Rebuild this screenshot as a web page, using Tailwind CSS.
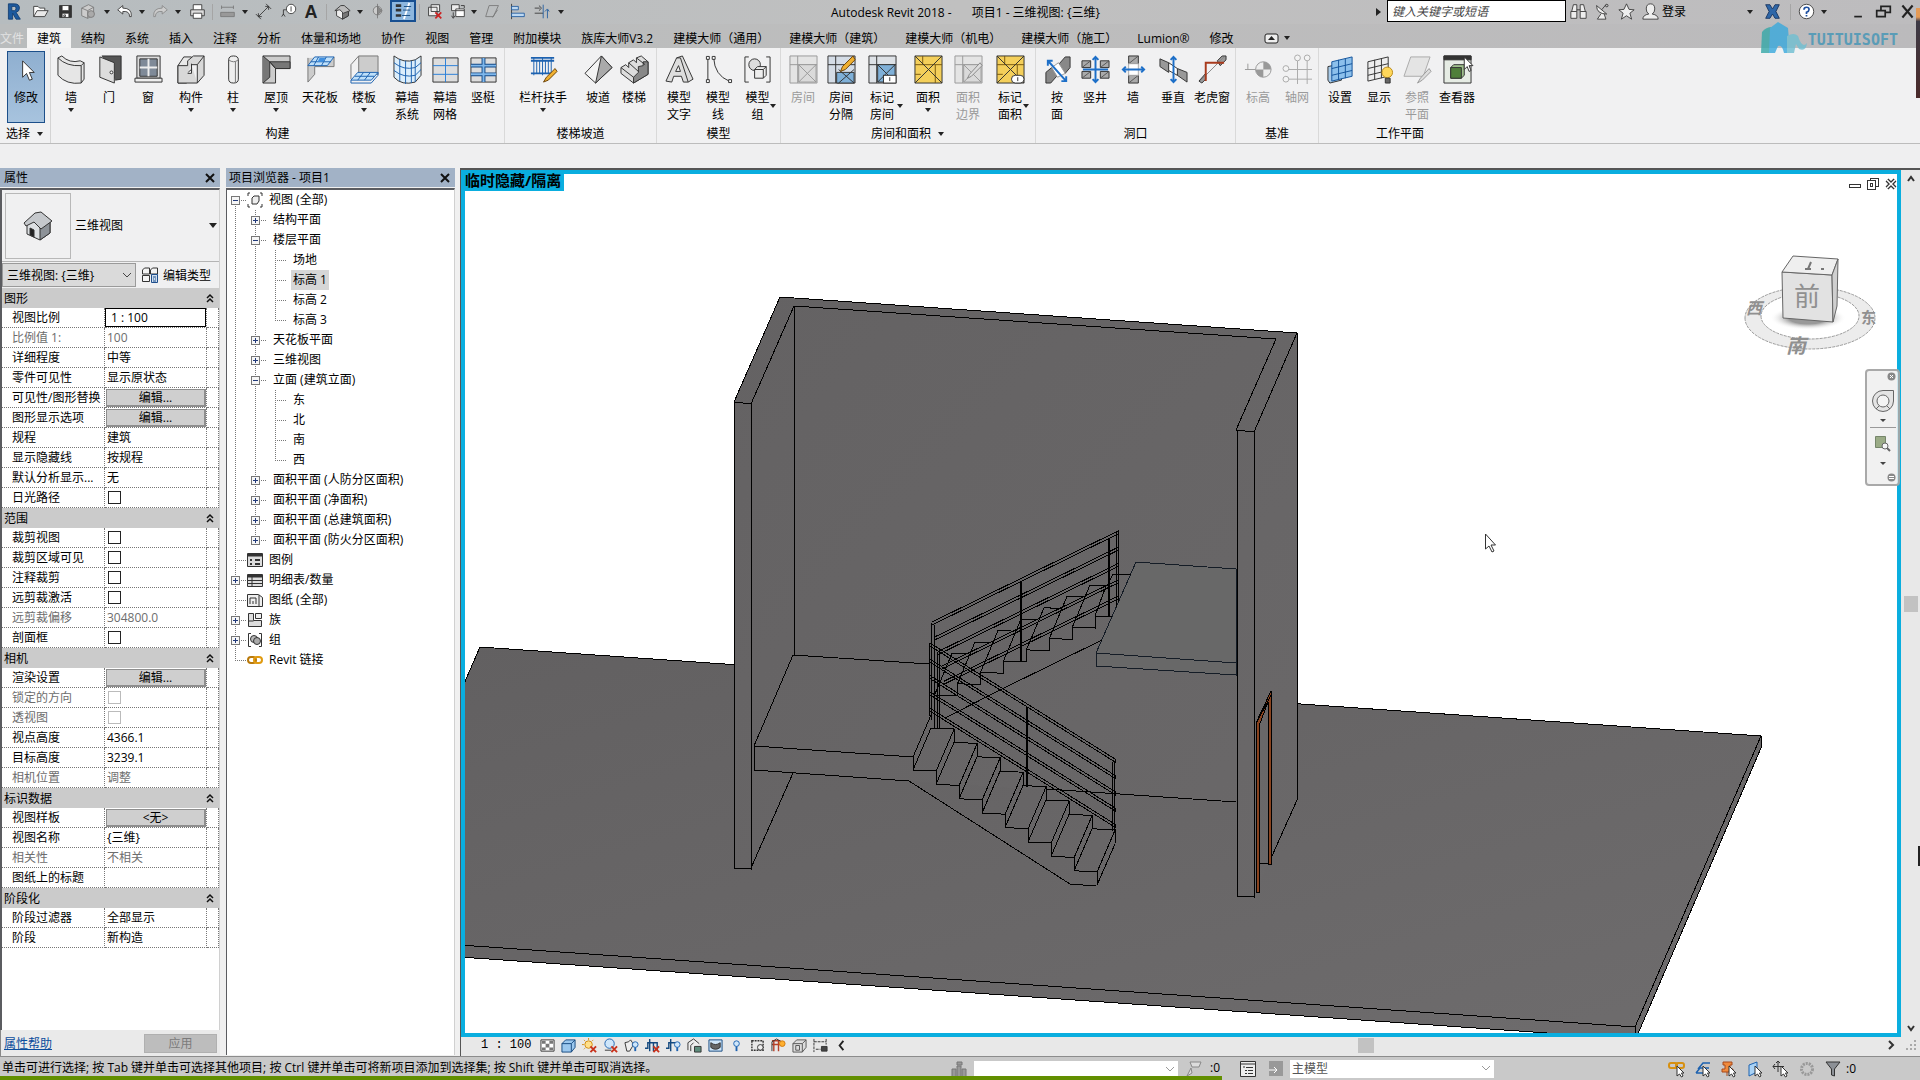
<!DOCTYPE html>
<html lang="zh-CN">
<head>
  <meta charset="UTF-8">
  <title>Autodesk Revit 2018 - 项目1 - 三维视图: {三维}</title>
  <script src="https://cdn.jsdelivr.net/npm/@tailwindcss/browser@4"></script>
</head>
<body class="h-screen flex flex-col overflow-hidden bg-[#f0f0f0] text-black text-[12px] leading-[17px] font-['Open_Sans','Noto_Sans_CJK_SC',sans-serif] relative">

  <!-- title bar -->
  <header class="h-6 shrink-0 flex items-center bg-linear-to-r from-[#b6bcbf] via-[#c0c0c0] to-[#bdbcbe] whitespace-nowrap">
    <div id="quick" class="flex items-center h-full w-[831px] shrink-0"></div>
    <h1 class="flex gap-5"><span>Autodesk Revit 2018 -</span><span>项目1 - 三维视图: {三维}</span></h1>
    <div class="ml-auto flex items-center h-full">
      <svg class="w-2 h-3 mr-1" viewBox="0 0 8 12"><path d="M1 2l5 4-5 4z" fill="#222"/></svg>
      <input type="text" aria-label="搜索" placeholder="键入关键字或短语" class="w-[179px] h-[22px] self-start bg-white border border-black px-1 italic placeholder:text-[#444]">
      <div id="account" class="flex items-center h-full"></div>
    </div>
  </header>

  <!-- ribbon tabs -->
  <nav class="h-6 shrink-0 flex items-end bg-linear-to-r from-[#b9bcbd] via-[#bdbdbd] to-[#bbbabc] whitespace-nowrap">
    <div id="tabs" class="flex items-end"></div>
    <button aria-label="最小化功能区" class="flex items-center gap-1 h-5 pl-5">
      <svg class="w-[15px] h-[11px]" viewBox="0 0 15 11"><rect x="1" y="1" width="13" height="9" rx="2" fill="#eee" stroke="#222"/><path d="M4 7l3.500-4 3.500 4z" fill="#222"/></svg>
      <svg class="w-2 h-2" viewBox="0 0 8 8"><path d="M1 2h6L4 6z" fill="#222"/></svg>
    </button>
  </nav>

  <!-- ribbon panels -->
  <section id="ribbon" class="h-24 shrink-0 flex bg-[#f1f1f2] border-b border-[#bcbcbc]"></section>
  <div class="h-6 shrink-0 bg-[#efeff0]"></div>

  <main class="flex-1 min-h-0 flex">

    <!-- properties palette -->
    <aside class="w-[220px] shrink-0 flex flex-col mr-[6px]">
      <div class="h-[19px] shrink-0 flex items-center justify-between bg-[#a2b2c6] pl-1 pr-1">
        <h2>属性</h2>
        <button aria-label="关闭属性" class="size-3"><svg viewBox="0 0 12 12" stroke="#111" stroke-width="2"><path d="M2 2l8 8M10 2l-8 8"/></svg></button>
      </div>
      <div class="flex-1 min-h-0 flex flex-col mt-[1px] border-l-2 border-t-2 border-[#5b5c60] border-r border-r-[#d0d0d0] bg-white">
        <button class="h-[72px] shrink-0 flex items-center bg-[#f0f0f1] border-b border-[#b4b4b4] text-left">
          <span class="ml-[3px] size-[66px] border border-[#b8b8b8] flex items-center justify-center">
            <svg class="size-8" viewBox="0 0 32 32" stroke="#333"><path d="M5 14v10l13 6 10-7V12L17 5z" fill="#dcdfe2"/><path d="M18 17v13l10-7V12z" fill="#8d9298"/><path d="M2 13L13 3l6-1 11 9-11 8-7-7-8 4z" fill="#c5c8cc"/><path d="M8 18l4 2v7l-4-2z" fill="#222"/></svg>
          </span>
          <span class="ml-1 flex-1">三维视图</span>
          <svg class="w-3 h-2" viewBox="0 0 12 8"><path d="M2 1h8L6 6z" fill="#222"/></svg>
        </button>
        <div class="h-[26px] shrink-0 flex items-center bg-[#f0f0f1]">
          <div class="relative w-[134px] h-6">
            <select aria-label="实例" class="appearance-none w-full h-full bg-[#dadada] border border-[#9a9a9a] pl-1"><option>三维视图: {三维}</option></select>
            <svg class="absolute right-1 top-2 w-[10px] h-[9px] pointer-events-none" viewBox="0 0 10 9" fill="none" stroke="#444"><path d="M1 2l4 4 4-4"/></svg>
          </div>
          <button class="flex items-center gap-1 ml-[5px]">
            <svg class="size-[18px]" viewBox="0 0 18 18" fill="#f4f4f4" stroke="#333"><path d="M1.500 4l2-2h5v6h-7zM9.500 4l2-2h5v6h-7zM1.500 9.500h7v6h-7z"/><path d="M10.500 8.500h6v8h-6z" fill="#cfdff0" stroke="#1e4e8c"/><path d="M12 11h3M12 13h1M14 13h1M12 15h3" stroke="#1e4e8c"/></svg>
            编辑类型
          </button>
        </div>
        <table class="w-full table-fixed border-separate border-spacing-0 whitespace-nowrap">
          <colgroup><col class="w-[103px]"><col class="w-[102px]"><col></colgroup>
          <tbody id="props"></tbody>
        </table>
      </div>
      <div class="h-[26px] shrink-0 flex items-center justify-between bg-[#eaeaea] border-l border-[#888] pl-[3px] pr-[3px]">
        <a href="#" class="text-[#0b4c9c] underline">属性帮助</a>
        <button disabled class="w-[73px] h-[19px] bg-[#bdbdbd] border border-[#b0b0b0] text-[#7b7b7b]">应用</button>
      </div>
    </aside>

    <!-- project browser -->
    <aside class="w-[229px] shrink-0 flex flex-col mr-[5px]">
      <div class="h-[19px] shrink-0 flex items-center justify-between bg-[#a2b2c6] pl-[3px] pr-1">
        <h2>项目浏览器 - 项目1</h2>
        <button aria-label="关闭项目浏览器" class="size-3"><svg viewBox="0 0 12 12" stroke="#111" stroke-width="2"><path d="M2 2l8 8M10 2l-8 8"/></svg></button>
      </div>
      <ul id="tree" class="flex-1 min-h-0 mt-[1px] mb-[1px] border-l border-t-2 border-[#5b5c60] border-r border-r-[#d0d0d0] bg-white whitespace-nowrap"></ul>
    </aside>

    <!-- drawing area -->
    <section class="flex-1 min-w-0 flex flex-col border-t-2 border-l border-[#555]">
      <div class="flex-1 min-h-0 flex">
        <div class="flex-1 min-w-0 relative border-4 border-[#0aaedf] bg-white">
          <svg class="absolute inset-0 w-full h-full" viewBox="465 174 1432 859" preserveAspectRatio="xMidYMid slice">
            <defs>
              <linearGradient id="ground" x1="0" y1="0" x2="1" y2="1"><stop offset="0" stop-color="#626061"/><stop offset="1" stop-color="#6e6c6d"/></linearGradient>
              <linearGradient id="face" x1="0" y1="0" x2="1" y2="1"><stop offset="0" stop-color="#646263"/><stop offset="1" stop-color="#6a6869"/></linearGradient>
              <radialGradient id="shade"><stop offset=".5" stop-color="#999"/><stop offset="1" stop-color="#fff" stop-opacity="0"/></radialGradient>
            </defs>
            <g stroke="#000" fill="none" shape-rendering="crispEdges">
              <!-- site slab -->
              <path d="M480 647L1761 736V748L1637 1036H1590L460 957V693z" fill="url(#ground)"/>
              <path d="M460 945L1635 1027L1761 736M1635 1027V1036"/>
              <!-- walls -->
              <path d="M780 297L1297 333V800L1271 856L1254 897L1236 896V803L793 773L751 869L734 868V402z" fill="url(#face)" stroke="none"/>
              <path d="M734 868V402L780 297L1297 333V800L1272 856M734 868L751 869V404L734 402M751 404L794 306L1276 339L1236 430L1254 432L1297 333M1237 430V896L1254 897V432M794 306V655M793 773L751 868"/>
              <path d="M1047 789L1236 802"/>
              <!-- lower landing -->
              <path d="M929 664L793 655L754 746L913 757M754 746V770L909 781L1070 884L1096 886"/>
              <!-- upper landing -->
              <path d="M1136 562L1236 569V675L1096 666V653z" fill="#686868" stroke="#141c26"/>
              <path d="M1096 653L1236 663" stroke="#141c26"/>
              <path d="M1102 640L1004 688L945 718"/>
              <path id="stairs"/>
              <path id="rails"/>
              <!-- door frame -->
              <path d="M1256 892V723L1271 691V864H1268V702L1259 726V892z" fill="#8a4420"/>
              <path d="M1259 863H1268M1257 722L1271 695"/>
            </g>
            <!-- view cube -->
            <g fill="none" stroke="#9a9a9a">
              <path fill-rule="evenodd" d="M1745 318a65 31 0 1 0 130 0a65 31 0 1 0 -130 0M1761 316a49 23 0 1 0 98 0a49 23 0 1 0 -98 0" fill="#ececec" stroke-dasharray="3 1"/>
              <ellipse cx="1808" cy="318" rx="38" ry="12" fill="url(#shade)" stroke="none"/>
              <path d="M1782 272L1832 275L1833 322L1783 318z" fill="#e2e2e2" stroke="#666"/>
              <path d="M1782 272L1793 256L1838 259L1832 275z" fill="#efefef" stroke="#666"/>
              <path d="M1832 275L1838 259L1837 306L1833 322z" fill="#cfcfcf" stroke="#666"/>
              <path d="M1811 262l-3 7M1805 269h6M1821 269h3" stroke="#777" stroke-width="2"/>
            </g>
            <g class="font-['Noto_Sans_CJK_SC',sans-serif]" fill="#909090">
              <text x="1794" y="306" font-size="26">前</text>
              <text x="1786" y="353" font-size="20" font-weight="bold" font-style="italic">南</text>
              <text x="1746" y="314" font-size="16" font-weight="bold" font-style="italic">西</text>
              <text x="1861" y="323" font-size="15" font-weight="bold">东</text>
            </g>
            <!-- mouse pointer -->
            <path d="M1485.500 534v15l3.500-3 3 6 2-1-3-6h4.500z" fill="#fff" stroke="#333"/>
          </svg>
          <span class="absolute -left-1 -top-1 h-[21px] pl-1 pr-[3px] bg-[#0aaedf] text-[15px] leading-[20px] font-bold">临时隐藏/隔离</span>
          <div class="absolute right-0 top-1 flex items-center gap-[6px]">
            <button aria-label="最小化视图"><svg class="size-3" viewBox="0 0 12 12"><rect x=".5" y="6.500" width="11" height="3" fill="#fff" stroke="#333"/></svg></button>
            <button aria-label="还原视图"><svg class="size-3" viewBox="0 0 12 12" fill="#fff" stroke="#333"><rect x="3.500" y=".5" width="8" height="8"/><rect x=".5" y="2.500" width="8" height="9"/><rect x="3.500" y="5.500" width="2" height="3"/></svg></button>
            <button aria-label="关闭视图"><svg class="size-3" viewBox="0 0 12 12" fill="none"><path d="M2 2l8 8M10 2l-8 8" stroke="#333" stroke-width="4"/><path d="M2 2l8 8M10 2l-8 8" stroke="#fff" stroke-width="1.500"/></svg></button>
          </div>
          <!-- navigation bar -->
          <div class="absolute -right-[3px] top-[195px] w-[35px] h-[117px] rounded border-2 border-[#8a8a8a]/70 bg-[#efefef]/85 flex flex-col items-center">
            <button aria-label="关闭导航栏" class="self-end"><svg class="size-[9px] mr-[2px] mt-[1px]" viewBox="0 0 9 9"><circle cx="4.500" cy="4.500" r="4" fill="#888"/><path d="M3 3l3 3M6 3L3 6" stroke="#fff"/></svg></button>
            <button aria-label="导航控制盘" class="mt-2"><svg class="size-6" viewBox="0 0 24 24" fill="#e4e4e4" stroke="#666"><path d="M12 1.500h10.500V12A10.500 10.500 0 1 1 12 1.500z"/><circle cx="12" cy="12" r="6" fill="#f3f3f3"/><path d="M8 17l-3 3M16 17l3 3"/></svg></button>
            <svg class="w-2 h-2 mt-1" viewBox="0 0 8 8"><path d="M1 2h6L4 5z" fill="#444"/></svg>
            <div class="w-[26px] border-t border-[#999] mt-[2px]"></div>
            <button aria-label="区域放大" class="mt-2"><svg class="size-4" viewBox="0 0 16 16"><path d="M.5.5h10v11H.5z" fill="#9aab86" stroke="#75856a"/><circle cx="10" cy="10" r="3" fill="#f5f5f5" stroke="#666"/><path d="M12 12l3 3" stroke="#666" stroke-width="2"/></svg></button>
            <svg class="w-2 h-2 mt-2" viewBox="0 0 8 8"><path d="M1 2h6L4 5z" fill="#444"/></svg>
            <svg class="size-[9px] mt-auto mb-[2px] mr-[2px] self-end" viewBox="0 0 9 9"><circle cx="4.500" cy="4.500" r="4" fill="#888"/><path d="M2 3.500h5M2 5.500h5" stroke="#fff"/></svg>
          </div>
        </div>
        <!-- vertical scroll bar -->
        <div class="w-[19px] shrink-0 bg-[#e8e8e8] flex flex-col items-center justify-between py-1">
          <svg class="w-[10px] h-[10px]" viewBox="0 0 10 10" fill="none" stroke="#333" stroke-width="2"><path d="M2 7l3-4 3 4"/></svg>
          <div class="w-[14px] h-4 bg-[#c2c2c2]"></div>
          <svg class="w-[10px] h-[10px]" viewBox="0 0 10 10" fill="none" stroke="#333" stroke-width="2"><path d="M2 3l3 4 3-4"/></svg>
        </div>
      </div>
      <!-- view control bar -->
      <div class="h-[19px] shrink-0 flex items-center bg-[#e8e8e8] pb-[3px]">
        <span class="w-[76px] pl-5 whitespace-pre font-['Liberation_Mono',monospace] text-[12px]">1 : 100</span>
        <div id="viewbar" class="flex items-center"></div>
        <div class="flex-1 flex justify-center pr-[6px]"><div class="w-4 h-[15px] bg-[#c2c2c2]"></div></div>
        <svg class="size-[10px] mr-[10px]" viewBox="0 0 10 10" fill="none" stroke="#333" stroke-width="2"><path d="M3 1l4 4-4 4"/></svg>
        <svg class="size-[10px] mr-1" viewBox="0 0 10 10" fill="#aaa"><path d="M8 0h2v2H8zM4 4h2v2H4zM8 4h2v2H8zM0 8h2v2H0zM4 8h2v2H4zM8 8h2v2H8z"/></svg>
      </div>
    </section>
  </main>

  <!-- status bar -->
  <footer class="h-6 shrink-0 flex items-center bg-[#c9c9c9] border-t border-[#8c8c8c] relative whitespace-nowrap">
    <span class="w-[950px] pl-[2px] pb-[2px]">单击可进行选择; 按 Tab 键并单击可选择其他项目; 按 Ctrl 键并单击可将新项目添加到选择集; 按 Shift 键并单击可取消选择。</span>
    <svg class="size-[18px] mr-[6px]" viewBox="0 0 18 18" fill="#999" stroke="#777"><path d="M2 9h4v8H2zM7 6h4v11H7zM12 9h4v8h-4zM7 2h5v3H7z"/></svg>
    <div class="relative w-[204px] h-4">
      <select aria-label="工作集" class="appearance-none block w-full h-full bg-white"><option></option></select>
      <svg class="absolute right-[3px] top-1 w-[10px] h-[9px] pointer-events-none" viewBox="0 0 10 9" fill="none" stroke="#999"><path d="M1 2l4 4 4-4"/></svg>
    </div>
    <svg class="size-4 ml-2 mr-2" viewBox="0 0 16 16" fill="#ddd" stroke="#888"><path d="M4 1h11l-2 5H6zM5 7l-4 8 5-3z"/></svg>
    <span class="w-[30px] pb-[2px]">:0</span>
    <svg class="size-4 mr-3" viewBox="0 0 16 16" fill="#eee" stroke="#333"><path d="M.5.500h15v15H.5z"/><path d="M1 3h14M3 6h2M6 6.500h7M5 9.500h2M8 9.500h5M5 12.500h2M8 12.500h5"/></svg>
    <svg class="size-4 mr-[6px]" viewBox="0 0 16 16"><path d="M1 0h14v15H1z" fill="#999"/><path d="M1 9h7M6 6l3 3-3 3" stroke="#fff" fill="none"/></svg>
    <div class="relative w-[204px] h-[18px]">
      <select aria-label="设计选项" class="appearance-none block w-full h-full bg-white pl-[2px] text-[#555]"><option>主模型</option></select>
      <svg class="absolute right-[3px] top-1 w-[10px] h-[9px] pointer-events-none" viewBox="0 0 10 9" fill="none" stroke="#999"><path d="M1 2l4 4 4-4"/></svg>
    </div>
    <div id="selectbar" class="flex items-center ml-auto"></div>
    <span class="w-[74px]">:0</span>
    <div class="absolute left-0 bottom-0 w-[1222px] h-1 bg-[#628f00]"></div>
  </footer>

  <!-- watermark and the sliver of the desktop behind the window -->
  <div class="absolute right-[22px] top-[22px] flex items-center opacity-80 pointer-events-none">
    <svg class="w-[48px] h-8" viewBox="0 0 48 32"><path d="M1 31L2 10Q6 5 12 5L10 31z" fill="#35a8a8"/><path d="M9 31L10 6L18 0L28 6L30 31H24Q22 22 18 24L15 31z" fill="#39a9dd"/><path d="M27 31L27 14Q34 10 38 14Q42 27 47 21Q46 30 39 27L36 22L34 31z" fill="#6fbfd2"/></svg>
    <span class="text-[15px] leading-[16px] font-bold text-[#4295b6] font-['DejaVu_Sans_Mono',monospace] pt-1">TUITUISOFT</span>
  </div>
  <div class="absolute right-0 top-[8px] w-1 h-[90px] bg-linear-to-b from-[#e59a55] from-10% via-[#3d3a46] via-15% to-[#4a2a2a]"></div>
  <div class="absolute right-0 top-[846px] w-[2px] h-5 bg-[#222]"></div>

  <script>
    const svg = (cls, size, body) =>
      `<svg class="${cls}" viewBox="0 0 ${size} ${size}" fill="none" stroke="#333">${body}</svg>`;
    const caret = '<svg class="w-2 h-2 mx-auto" viewBox="0 0 8 8"><path d="M1 2h6L4 6z" fill="#222"/></svg>';

    // ---- quick access toolbar: [name, cell class, 20px drawing]
    const quick = [
      ["Revit", "w-[26px]", '<path d="M4 1h7q6 0 6 5 0 4-4 5l5 8h-5l-4-7v7H4zM8 4v5h3q2 0 2-3 0-2-2-2z" fill="#1d5a9e" stroke="#123c70"/>'],
      ["打开", "w-[28px]", '<path d="M2 16V4h5l2 2h6v3" fill="#fff"/><path d="M2 16l4-7h13l-4 7z" fill="#e9e9e9"/>'],
      ["保存", "w-[22px]", '<path d="M3 3h14v14H3z" fill="#333"/><path d="M6 3h8v6H6zM6 12h8v5H6z" fill="#fff"/><path d="M8 14h2v2H8z"/>'],
      ["同步", "w-[25px]", '<path d="M2 6l8-4 6 3v9l-7 4-7-3z" fill="#ccc" stroke="#777"/><path d="M2 6l7 3 7-4M9 9v9" stroke="#777"/><circle cx="13" cy="13" r="4" fill="#aaa" stroke="#777"/>'],
      ["", "w-[11px]", "v"],
      ["撤销", "w-[25px]", '<path d="M8 3L2 8l6 5v-3q8-1 8 6h2q1-10-10-10z" fill="#fff"/>'],
      ["", "w-[10px]", "v"],
      ["重做", "w-[26px]", '<path d="M12 3l6 5-6 5v-3q-8-1-8 6H2Q1 6 12 6z" fill="#ccc" stroke="#888"/>'],
      ["", "w-[10px]", "v"],
      ["打印", "w-[28px]", '<path d="M5 8V2h10v6" fill="#fff"/><path d="M2 8h16v7H2z" fill="#ddd"/><path d="M5 12h10v6H5z" fill="#fff"/>'],
      ["", "w-[2px]", "|"],
      ["测量", "w-[28px]", '<path d="M3 5h14M3 3v4M17 3v4" stroke="#777"/><path d="M2 11h16v5H2z" fill="#999" stroke="#777"/>'],
      ["", "w-[8px]", "v"],
      ["对齐尺寸标注", "w-[28px]", '<path d="M4 16L16 4M1 13l6 6M13 1l6 6M4 12v4h4M12 4h4v4"/>'],
      ["按类别标记", "w-[23px]", '<circle cx="13" cy="7" r="5.500" fill="#fff"/><path d="M13 4v6M7 8H4v6M2 16l2-3 2 3"/>'],
      ["文字", "w-[22px]", "A"],
      ["", "w-[8px]", "|"],
      ["默认三维视图", "w-[25px]", '<path d="M3 9v6l7 4 7-4V8l-7-5z" fill="#eee"/><path d="M10 11v8l7-4V8z" fill="#777"/><path d="M1 9l7-6h4l7 6-8 3-4-4z" fill="#bbb"/>'],
      ["", "w-[10px]", "v"],
      ["剖面", "w-[25px]", '<circle cx="10" cy="9" r="5" fill="#ccc" stroke="#777"/><path d="M10 1v17" stroke="#777"/><path d="M10 4l5 5-5 5z" stroke="#777" fill="#888"/>'],
      ["细线", "on", '<path d="M2 4h6M2 9h6M2 15h6" stroke-width="3"/><path d="M17 1l-6 18" stroke="#fff" stroke-width="2"/><path d="M11 5h8M10 9h8M9 15h9" stroke="#14497f"/>'],
      ["", "w-[6px]", "|"],
      ["关闭隐藏窗口", "w-[24px]", '<path d="M6 2h10v8H6zM3 5h10v10H3z" fill="#eee"/><path d="M11 11l7 7M18 11l-7 7" stroke="#c22" stroke-width="2"/>'],
      ["切换窗口", "w-[23px]", '<path d="M3 2h9v7H3z" fill="#eee"/><path d="M8 7h10v9H8zM8 9h10" fill="#fff"/><path d="M5 11v6M3 15l2 3 2-3M14 3h4v3"/>'],
      ["", "w-[10px]", "v"],
      ["参照平面", "w-[27px]", '<path d="M6 3h11L11 16H2zM16 8l-6 9" stroke="#777"/>'],
      ["对齐", "w-[22px]", '<path d="M3 1v18"/><path d="M3 4h8v4H3zM3 12h15v4H3z" fill="#bcd8f2" stroke="#1d5a9e"/>'],
      ["修剪", "w-[26px]", '<path d="M2 6h6M2 12h10M7 3l3 3-3 3" stroke="#333"/><path d="M12 2v16M17 8v10M14 10l3-3 2 3" stroke="#1d5a9e"/>'],
      ["", "w-[14px]", "v"]
    ];
    const drawCell = ([name, w, d]) => {
      if (d === "v") return `<span class="${w}">${caret}</span>`;
      if (d === "|") return `<span class="${w} flex justify-center"><i class="w-px h-4 bg-[#a5a5a5]"></i></span>`;
      if (d === "A") return `<button class="${w} text-[18px] font-bold font-['Liberation_Sans',sans-serif] text-[#222]">A</button>`;
      if (w === "on") return `<button aria-label="${name}" class="w-[26px] h-[22px] self-start border-2 border-[#174f91] bg-[#8db7df] flex items-center justify-center">${svg("size-[18px]", 20, d)}</button>`;
      return `<button aria-label="${name}" class="${w} flex justify-center pb-[2px]">${svg("size-[17px] shrink-0", 20, d)}</button>`;
    };
    document.getElementById("quick").innerHTML = quick.map(drawCell).join("");

    const account = [
      ["搜索", "w-[24px]", '<path d="M2 10l2-8h4v8M12 10V2h4l2 8" fill="#eee"/><path d="M1 10h7v8H1zM12 10h7v8h-7zM8 8h4" fill="#eee"/>'],
      ["通讯中心", "w-[24px]", '<path d="M3 3q0 10 12 10zM9 8l5-6M8 13l-4 6h10l-2-6" fill="#eee"/><circle cx="15" cy="3" r="1.500"/>'],
      ["收藏夹", "w-[24px]", '<path d="M10 1l3 6.500 6 .5-5 4 2 7-6-4-6 4 2-7-5-4 6-.5z" fill="#eee"/>'],
      ["用户", "w-[24px]", '<path d="M10 1q5 0 5 6 0 4-3 6 7 1 7 6H1q0-5 7-6-3-2-3-6 0-6 5-6z" fill="#eee"/>'],
      ["登录", "w-[82px]", "t"],
      ["", "w-[12px]", "v"],
      ["Exchange", "w-[32px]", '<path d="M2 2h5l3 5 3-5h5l-4 8 4 8h-5l-3-5-3 5H2l4-8z" fill="#2f67a8" stroke="#14305c"/>'],
      ["", "w-[4px]", "|"],
      ["帮助", "w-[28px]", '<circle cx="10" cy="10" r="8.500" fill="#fff"/><path d="M7 8q0-3 3-3t3 2.500q0 2-3 3.500v2M10 14v2" stroke="#1d4fa0" stroke-width="2"/>'],
      ["", "w-[8px]", "v"],
      ["最小化", "w-[44px] pl-[16px]", '<path d="M5 16h9" stroke="#222" stroke-width="2"/>'],
      ["还原", "w-[22px]", '<path d="M7 8V4h11v7h-5M2 9h10v7H2z" stroke="#222" stroke-width="2"/>'],
      ["关闭", "w-[26px]", '<path d="M4 3l12 14M16 3L4 17" stroke="#222" stroke-width="2.500"/>']
    ];
    document.getElementById("account").innerHTML = account.map(c =>
      c[2] === "t" ? `<button class="${c[1]} text-left pb-[2px]">${c[0]}</button>` : drawCell(c)).join("");

    // ---- ribbon tabs
    const tabs = ["建筑", "结构", "系统", "插入", "注释", "分析", "体量和场地", "协作", "视图", "管理", "附加模块", "族库大师V3.2",
      "建模大师（通用）", "建模大师（建筑）", "建模大师（机电）", "建模大师（施工）", "Lumion®", "修改"];
    document.getElementById("tabs").innerHTML =
      '<button class="h-5 w-[27px] text-left text-[#e2e2e2]">文件</button>' +
      tabs.map((t, i) => `<button class="h-5 px-[10px] ${i === 0 ? "bg-[#f4f4f4]" : ""}">${t}</button>`).join("");

    // ---- ribbon panels
    const room = (bg, line, part) => `<path d="M1 1h28v28H1z" fill="${bg}" stroke="${line}"/><path d="M9 1v28M1 10h28" stroke="${line}"/><path d="M10 10h18v18H10z" fill="${part}" stroke="${line}"/><path d="M10 10l18 18M28 10L10 28" stroke="${line}"/>`;
    const area = '<path d="M1 1h28v28H1z" fill="#f4cf5a"/><path d="M9 1v9M1 10h28M22 10v19M1 20h6" stroke="#7a5a10"/><path d="M1 1l28 28M29 1L1 29"/>';
    const tag = (r) => `<rect x="16" y="21" width="13" height="8" rx="${r}" fill="#fff"/><path d="M22.500 23v4"/>`;
    const hatch = (x, y, w, h) => `<path d="M${x} ${y}h${w}v${h}h-${w}z" fill="#aaa"/><path d="M${x} ${y + h}l${w}-${h}" stroke="#555"/>`;
    const icons = {
      wall: '<path d="M1 3l4-2q8 8 19 5l4 2v17l-3 4Q10 31 1 21z" fill="#e6e6e6"/><path d="M1 3q9 9 24 8v18M25 11l3-3" fill="none"/>',
      door: '<path d="M7 1h20v24l-6 1" fill="#555"/><path d="M5 2l15 6v21L5 23z" fill="#ddd"/><circle cx="17" cy="18" r="1.500" fill="#fff"/>',
      window: '<path d="M3 1h24v23H3z" fill="#ddd"/><path d="M6 4h18v18H6z" fill="#7f8a98"/><path d="M15 4v18M6 13h18" stroke="#eee" stroke-width="2"/><path d="M1 24h28v4H1z" fill="#eee"/>',
      part: '<path d="M1 11l6-9h8v13l-5 4v10H1z" fill="#e8e8e8"/><path d="M1 11h10V6l6-5h11v20l-7 8H1zM21 29V10h-6M21 10l7-9M11 19H15V9" fill="#d8d8d8"/>',
      column: '<path d="M10 5q0-4 5-4t5 4v20q0 4-5 4t-5-4z" fill="#eee"/><path d="M10 5q5 4 10 0M17 7v21" stroke="#777"/>',
      roof: '<path d="M1 1h28v13H14v15H1z" fill="#ccc"/><path d="M1 1l7 6h21v7H14l-6-7v16l-7 6" fill="#777"/><path d="M8 7l6 7"/>',
      ceiling: '<path d="M2 3v25l7-8V12h20V2" fill="#ccc" stroke="#777"/><path d="M2 11l7-9h20l-7 9z" fill="#bfe0fa" stroke="#1d62b0"/><path d="M5 7h21M13 2l-5 9M21 2l-5 9" stroke="#1d62b0"/><path d="M14 3h6l-2 4h-6z" fill="#3f8fe0" stroke="none"/>',
      floor: '<path d="M9 1h20v19H9z" fill="#ccc" stroke="#777"/><path d="M9 1L1 10v15" stroke="#777"/><path d="M1 26l7-8h21l-7 8z" fill="#bfe0fa" stroke="#1d62b0"/><path d="M1 26v3h21l7-8v-3M5 22h20M14 18l-6 8M21 18l-6 8" stroke="#1d62b0"/>',
      curtain: '<path d="M1 1q10 8 22 4l6-4v20l-6 7Q9 32 1 23z" fill="#dceefb"/><path d="M1 8q10 8 22 5l6-5M1 16q10 8 22 5l6-6M7 4v23M13 6v24M19 6v23M23 5v23" stroke="#1d62b0"/>',
      grid: '<path d="M2 3h26v25H2z" fill="#ddd" stroke="#333"/><path d="M15 3v25M2 11h26M2 20h26" stroke="#2a7fd8"/>',
      mullion: '<path d="M2 3h26v25H2z" fill="#ddd"/><path d="M15 3v25M2 11h26M2 20h26" stroke="#164a86" stroke-width="4"/><path d="M15 3v25M2 11h26M2 20h26" stroke="#7fb8ec" stroke-width="2"/>',
      railing: '<path d="M2 3h24M2 6h24M2 19h24" stroke="#1d62b0" stroke-width="2"/><path d="M5 3v18M8 6v13M11 6v13M14 3v18M17 6v13M20 6v13M23 3v18" stroke="#1d62b0"/><path d="M27 14l-9 9-3 5 5-2 9-9z" fill="#f0b030" stroke="#6b4208"/>',
      ramp: '<path d="M1 19L18 1l11 12-17 16z" fill="#f3f3f3"/><path d="M18 1l-6 28 17-16z" fill="#aaa"/>',
      stair: '<path d="M1 13l5-3 3 3V8l5-3 3 3V3l5-2 7 6v13L14 29 1 19z" fill="#ddd"/><path d="M14 29v-6l5-5v-6l5-1V7l5 0v13z" fill="#888"/><path d="M1 13l13 10M9 8l10 9M17 3l9 7"/>',
      text: '<path d="M1 27L12 3l6-2 11 24-5 3h-5l-2-6H9l-2 6zM11 17h5l-2-6z" fill="#ddd"/><path d="M12 3h4l8 25" stroke="#333"/>',
      line: '<path d="M4 3v24M10 3q1 18 16 24"/><path d="M2.500 1.500h3v3h-3zM2.500 25.500h3v3h-3zM8.500 1.500h3v3h-3zM25.500 25.500h3v3h-3z" fill="#fff"/>',
      group: '<path d="M6 2H2v26h4M24 2h4v26h-4"/><circle cx="12" cy="10" r="6" fill="#ddd"/><path d="M12 15l3-3h9v9l-3 3h-9zM12 15h9v9M21 15l3-3" fill="#eee"/>',
      room: room("#e4e4e4", "#999", "#dadada"),
      split: '<path d="M1 1h28v28H1z" fill="#d4dce6"/><path d="M9 1v28M1 10h28" stroke="#333"/><path d="M10 18h18v11H10z" fill="#7fb0d8"/><path d="M12 29l16-14M12 15l16 14"/><path d="M27 1L16 12l-2 5 5-2L29 5z" fill="#f0b030" stroke="#6b4208"/>',
      tagroom: room("#dde1e6", "#333", "#7fb0d8") + tag(0),
      area: area,
      border: room("#e4e4e4", "#999", "#dadada") + '<path d="M27 8L16 20l-2 4 4-2L29 11z" fill="#ddd" stroke="#888"/>',
      tagarea: area + tag(4),
      byface: '<path d="M16 10l7-8h5v11l-5 6zM3 18l6-5 6 8-7 8H3z" fill="#888"/><path d="M9 13l7-5 7 11-8 4z" fill="#fff" stroke="#999"/><path d="M6 7l17 19M5 11V6h5M24 22v5h-5" stroke="#1d6fc8" stroke-width="2"/>',
      shaft: hatch(1, 6, 9, 7) + hatch(20, 6, 9, 7) + hatch(1, 17, 9, 7) + hatch(20, 17, 9, 7) + '<path d="M15 2v26M2 15h26M12 5l3-3 3 3M12 25l3 3 3-3" stroke="#1d6fc8" stroke-width="2"/>',
      opening: hatch(10, 1, 10, 8) + hatch(10, 21, 10, 8) + '<path d="M10 9h10v12H10z" fill="#fff" stroke="#aaa"/><path d="M4 15h22M7 12l-3 3 3 3M23 12l3 3-3 3" stroke="#1d6fc8" stroke-width="2"/>',
      vertical: '<path d="M1 4l9 4v10l-9-6zM19 14l10 4v10l-10-7z" fill="#999"/><path d="M10 8l9 6v7l-9-5z" fill="#fff"/><path d="M15 2v26M12 5l3-3 3 3M12 25l3 3 3-3" stroke="#1d6fc8" stroke-width="2"/>',
      dormer: '<path d="M20 6l5-5h4v4l-6 6zM1 27l7-8v6l-4 4z" fill="#999"/><path d="M2 27L27 2" stroke="#888"/><path d="M8 27V8h19" stroke="#a83a1c" stroke-width="2"/>',
      level: '<path d="M1 15h12M4 9v6" stroke="#999"/><circle cx="20" cy="15" r="8" fill="#eee" stroke="#999"/><path d="M20 7v8h8a8 8 0 0 0-8-8zM20 23v-8h-8a8 8 0 0 0 8 8z" fill="#999" stroke="none"/>',
      axis: '<path d="M15 6v24M25 6v24M6 15h24M6 25h24" stroke="#aaa"/><g fill="#f4f4f4" stroke="#aaa"><circle cx="15" cy="3" r="3"/><circle cx="25" cy="3" r="3"/><circle cx="3" cy="14" r="3"/><circle cx="3" cy="25" r="3"/></g>',
      setplane: '<path d="M2 12l14-3v17L4 29l-2-3z" fill="#a9cbe8" stroke="#333"/><path d="M6 7l21-5v20L6 27z" fill="#8cc0ec" stroke="#14549c"/><path d="M13 5v20M20 4v20M6 14l21-5M6 21l21-5" stroke="#14549c"/>',
      show: '<path d="M3 7l21-5v20L3 27z" fill="#eee"/><path d="M10 5v20M17 4v20M3 14l21-5M3 21l21-5"/><circle cx="23" cy="18" r="5.500" fill="#ffd75a" stroke="#b98a1a"/><path d="M21 24h5v5h-5z" fill="#666"/>',
      refplane: '<path d="M8 2h20l-7 20H1z" fill="#e4e4e4" stroke="#aaa"/><path d="M27 14l-9 10-3 5 5-3 9-9z" fill="#ddd" stroke="#999"/>',
      viewer: '<path d="M1 1h28v28H1z" fill="#e6ece4"/><path d="M1 1h28v4H1z" fill="#333"/><path d="M8 13l3-3h11v11l-3 3H8z" fill="#9fc08c"/><path d="M8 13h11v11H8z" fill="#4f7f3a"/><path d="M22 2v13l3-3 2 5 2-1-2-5h4z" fill="#fff"/>'
    };
    // each tool: [icon, lines, width class, state] where state is v (caret below), > (caret beside), off (disabled)
    const panels = [
      ["构建", "w-[454px]", [
        ["wall", "墙", "w-[40px]", "v"], ["door", "门", "w-[36px]"], ["window", "窗", "w-[42px]"], ["part", "构件", "w-[44px]", "v"],
        ["column", "柱", "w-[40px]", "v"], ["roof", "屋顶", "w-[46px]", "v"], ["ceiling", "天花板", "w-[42px]"], ["floor", "楼板", "w-[46px]", "v"],
        ["curtain", "幕墙<br>系统", "w-[40px]"], ["grid", "幕墙<br>网格", "w-[36px]"], ["mullion", "竖梃", "w-[40px]"]]],
      ["楼梯坡道", "w-[152px]", [["railing", "栏杆扶手", "w-[76px]", "v"], ["ramp", "坡道", "w-[34px]"], ["stair", "楼梯", "w-[38px]"]]],
      ["模型", "w-[124px]", [["text", "模型<br>文字", "w-[44px]"], ["line", "模型<br>线", "w-[34px]"], ["group", "模型<br>组", "w-[45px]", ">"]]],
      ["房间和面积", "w-[255px]", [
        ["room", "房间", "w-[44px]", "off"], ["split", "房间<br>分隔", "w-[32px]"], ["tagroom", "标记<br>房间", "w-[50px]", ">"],
        ["area", "面积", "w-[42px]", "v"], ["border", "面积<br>边界", "w-[38px]", "off"], ["tagarea", "标记<br>面积", "w-[46px]", ">"]], true],
      ["洞口", "w-[200px]", [
        ["byface", "按<br>面", "w-[42px]"], ["shaft", "竖井", "w-[34px]"], ["opening", "墙", "w-[42px]"], ["vertical", "垂直", "w-[38px]"], ["dormer", "老虎窗", "w-[40px]"]]],
      ["基准", "w-[83px]", [["level", "标高", "w-[44px]", "off"], ["axis", "轴网", "w-[34px]", "off"]]],
      ["工作平面", "w-[162px]", [
        ["setplane", "设置", "w-[42px]"], ["show", "显示", "w-[36px]"], ["refplane", "参照<br>平面", "w-[40px]", "off"], ["viewer", "查看器", "w-[40px]"]]]
    ];
    const tool = ([icon, label, w, state]) =>
      `<button ${state === "off" ? "disabled" : ""} class="${w} relative h-full pt-[7px] flex flex-col items-center whitespace-nowrap disabled:text-[#9a9a9a]">
        ${svg("size-[29px] shrink-0 mb-[5px] overflow-visible", 30, icons[icon])}<span>${label}</span>
        ${state === "v" ? `<span>${caret}</span>` : ""}
        ${state === ">" ? `<span class="absolute right-[3px] top-[54px] w-2">${caret}</span>` : ""}
      </button>`;
    document.getElementById("ribbon").innerHTML =
      `<div class="w-[51px] shrink-0 border-r border-[#d4d4d4] flex flex-col items-center">
        <button class="mt-[3px] ml-[2px] w-[38px] h-[72px] shrink-0 border border-[#1c4f8a] bg-linear-to-b from-[#8fafd0] to-[#a7c3de] flex flex-col items-center pt-[5px]">
          ${svg("size-[29px] mb-[3px]", 30, '<path d="M11 4v17l4-4 3 7 3-1-3-7h5z" fill="#fff"/>')}修改
        </button>
        <button class="flex items-center gap-[6px] mt-[2px]">选择<span>${caret}</span></button>
      </div>` +
      panels.map(([title, w, tools, more]) =>
        `<div class="${w} shrink-0 border-r border-[#d9d9d9] last:border-r-0 flex flex-col">
          <div class="flex h-[77px]">${tools.map(tool).join("")}</div>
          <div class="flex justify-center items-center gap-[6px]">${title}${more ? `<span>${caret}</span>` : ""}</div>
        </div>`).join("");

    // ---- property rows: [name, value, kind]
    const groups = [
      ["图形", [["视图比例", "1 : 100", "edit"], ["比例值 1:", "100", "off"], ["详细程度", "中等"], ["零件可见性", "显示原状态"],
        ["可见性/图形替换", "编辑...", "btn"], ["图形显示选项", "编辑...", "btn"], ["规程", "建筑"], ["显示隐藏线", "按规程"],
        ["默认分析显示...", "无"], ["日光路径", "", "box"]]],
      ["范围", [["裁剪视图", "", "box"], ["裁剪区域可见", "", "box"], ["注释裁剪", "", "box"], ["远剪裁激活", "", "box"],
        ["远剪裁偏移", "304800.0", "off"], ["剖面框", "", "box"]]],
      ["相机", [["渲染设置", "编辑...", "btn"], ["锁定的方向", "", "boxoff"], ["透视图", "", "boxoff"], ["视点高度", "4366.1"],
        ["目标高度", "3239.1"], ["相机位置", "调整", "off"]]],
      ["标识数据", [["视图样板", "&lt;无&gt;", "btn"], ["视图名称", "{三维}"], ["相关性", "不相关", "off"], ["图纸上的标题", ""]]],
      ["阶段化", [["阶段过滤器", "全部显示"], ["阶段", "新构造"]]]
    ];
    const value = (v, kind, id) => {
      if (kind === "edit") return `<input id="${id}" type="text" value="${v}" class="block w-[101px] h-[19px] border border-black pl-[5px]">`;
      if (kind === "btn") return `<button id="${id}" class="block w-[100px] h-[18px] ml-[1px] leading-[15px] bg-[#cfcfcf] border border-[#8e8e8e] border-b-2 border-r-2">${v}</button>`;
      if (kind === "box") return `<input id="${id}" type="checkbox" class="block appearance-none size-[13px] ml-[3px] border border-[#222] bg-white">`;
      if (kind === "boxoff") return `<input id="${id}" type="checkbox" disabled class="block appearance-none size-[13px] ml-[3px] border border-[#bbb] bg-white">`;
      return `<span class="pl-[2px]">${v}</span>`;
    };
    const cell = "h-5 p-0 border-b border-r border-dotted border-[#777]";
    document.getElementById("props").innerHTML = groups.map(([title, rows], g) =>
      `<tr><th colspan="3" class="h-5 p-0 bg-[#cbcbcb] font-normal text-left"><div class="flex items-center justify-between pl-[2px] pr-1">${title}
        <svg class="size-[10px]" viewBox="0 0 10 10" fill="none" stroke="#111" stroke-width="1.500"><path d="M2 5l3-3 3 3M2 9l3-3 3 3"/></svg></div></th></tr>` +
      rows.map(([name, v, kind = ""], r) => {
        const id = `prop-${g}-${r}`;
        const label = /edit|btn|box/.test(kind) ? `<label for="${id}">${name}</label>` : name;
        return `<tr class="${kind.endsWith("off") ? "text-[#6d6d6d]" : ""}"><td class="${cell} pl-[10px]">${label}</td><td class="${cell}">${value(v, kind, id)}</td><td class="${cell}"></td></tr>`;
      }).join("")).join("");

    // ---- project browser tree: [guides, label, icon]
    // guide letters: ~ root, | through, t branch, L last branch, + closed, E closed and last, - open
    const treeIcons = {
      view: '<path d="M3 1H1v3M13 1h2v3M3 15H1v-3M13 15h2v-3"/><path d="M5 6l2-2h5v5l-2 3H5z" fill="#eee"/>',
      legend: '<path d="M.5 1.500h15v13H.5z" fill="#ddd"/><path d="M1 3h14" stroke-width="3"/><path d="M3 8h2M8 8h5M3 12h2M8 12h5" stroke-width="2"/>',
      sched: '<path d="M.5 2.500h15v12H.5z" fill="#ddd"/><path d="M1 4h14" stroke-width="3"/><path d="M5 3v12M1 8.500h15M1 11.500h15"/>',
      sheet: '<path d="M.5 2.500h11l4 3v9H.5z" fill="#eee"/><path d="M3 12V6h6v6M6 12V9M12 3v11"/>',
      family: '<path d="M1.500 1.500h5v7h8v6h-13z" fill="#ddd"/><path d="M8.500 1.500h6v5h-6z" fill="#eee"/><path d="M1.500 9h5"/>',
      group: '<path d="M4 1.500H1.500v13H4M12 1.500h2.500v13H12"/><circle cx="7" cy="7" r="3.500" fill="#bbb"/><circle cx="10" cy="9" r="3.500" fill="#aaa"/>',
      link: '<rect x="1" y="5" width="8" height="6" rx="3" stroke="#b9790a" stroke-width="2"/><rect x="7" y="5" width="8" height="6" rx="3" stroke="#e09a10" stroke-width="2"/>'
    };
    const tree = [
      ["~", "视图 (全部)", "view"], ["|+", "结构平面"], ["|-", "楼层平面"], ["||t", "场地"], ["||t", "标高 1"], ["||t", "标高 2"], ["||L", "标高 3"],
      ["|+", "天花板平面"], ["|+", "三维视图"], ["|-", "立面 (建筑立面)"], ["||t", "东"], ["||t", "北"], ["||t", "南"], ["||L", "西"],
      ["|+", "面积平面 (人防分区面积)"], ["|+", "面积平面 (净面积)"], ["|+", "面积平面 (总建筑面积)"], ["|E", "面积平面 (防火分区面积)"],
      ["t", "图例", "legend"], ["+", "明细表/数量", "sched"], ["t", "图纸 (全部)", "sheet"], ["+", "族", "family"], ["+", "组", "group"], ["L", "Revit 链接", "link"]
    ];
    const guide = (c) => {
      const down = c === "~" ? "M8.500 10V20" : (c === "L" || c === "E") ? "M8.500 0V10" : "M8.500 0V20";
      const across = c === "|" ? "" : "M8 10.500H20";
      const box = "+-~E".includes(c) ? `<rect x="4.500" y="6.500" width="8" height="8" fill="#f6f6f6" stroke="#777"/><path d="M6 10.500h5${"+E".includes(c) ? "M8.500 8v5" : ""}" stroke="#223a7a"/>` : "";
      return `<svg class="size-5 shrink-0" viewBox="0 0 20 20" fill="none"><path d="${down}${across}" stroke="#777" stroke-dasharray="1 1"/>${box}</svg>`;
    };
    document.getElementById("tree").innerHTML = tree.map(([g, label, icon]) =>
      `<li class="h-5 flex items-center">${[...g].map(guide).join("")}${icon ? svg("size-4 shrink-0", 16, treeIcons[icon]) : ""}
        <a href="#" class="${icon ? "ml-[4px]" : "ml-1"} px-[2px] leading-5 ${label === "标高 1" ? "bg-[#d6d6d6]" : ""}">${label}</a></li>`).join("");

    // ---- view control bar
    const cross = '<path d="M9 9l6 6M15 9l-6 6" stroke="#c8321c" stroke-width="2"/>';
    const bulb = '<circle cx="12" cy="7" r="3" fill="#cfe6fa" stroke="#1d62b0"/><path d="M12 10v4" stroke="#1d62b0" stroke-width="2"/>';
    const viewbar = [
      '<path d="M1 2h14v12H1z" fill="#fff"/><path d="M2 3h4v3H2zM10 3h4v3h-4zM6 6h4v4H6zM2 10h4v3H2zM10 10h4v3h-4z" fill="#777" stroke="none"/>',
      '<path d="M1 6l4-4h10v8l-4 5H1z" fill="#9cc8ee" stroke="#14497f"/><path d="M1 6h10v9M11 6l4-4" stroke="#14497f"/>',
      '<circle cx="7" cy="7" r="4" fill="#ffe08a" stroke="#d08a10"/><path d="M7 0v2M0 7h2M2 2l1 1M12 2l-1 1M2 12l1-1" stroke="#d08a10"/>' + cross,
      '<circle cx="7" cy="6" r="5" fill="#cfe6fa" stroke="#1d62b0"/><path d="M2 13h7"/>' + cross,
      '<path d="M1 5l4-1 2-2 2 3v4l-3 5H3z" fill="#eee"/>' + bulb,
      '<path d="M0 11h3V5h10v8M5 1v13M9 5v9" stroke="#14497f" stroke-width="1.500"/>' + cross,
      '<path d="M0 11h3V5h8M5 1v13" stroke="#14497f" stroke-width="1.500"/>' + bulb,
      '<path d="M1 13V5l6-4 6 5M4 14V8l3-3" fill="#eee"/><path d="M8 9h7v6H8z" fill="#5e8c7c"/>',
      '<path d="M1 2h14v12H1z" fill="#cfe6fa" stroke="#14497f"/><path d="M3 5q5 4 10 0v5q-5 4-10 0z" fill="#666"/>',
      '<circle cx="8" cy="6" r="3" fill="#cfe6fa" stroke="#1d62b0"/><path d="M8 9v5" stroke="#1d62b0" stroke-width="2"/>',
      '<path d="M2 3h12v10H2z" stroke-width="1.500" stroke-dasharray="2 1"/><circle cx="11" cy="10" r="3" fill="#eee"/>',
      '<path d="M1 7h9M3 3v11M8 3v11M1 3h9" stroke="#b5402a" stroke-width="1.500"/><path d="M1 14V4l5-3 5 3"/><circle cx="12" cy="6" r="3" fill="#ffb030" stroke="#d07a10"/>',
      '<path d="M1 6l4-4h10v8l-4 5H1z" fill="#ddd" stroke="#555"/><path d="M1 6h10v9M11 6l4-4M4 8h4v5H4z" stroke="#555"/>',
      '<path d="M1 1v14M1 4h13M14 1v6M3 12h5" stroke-dasharray="3 1"/><path d="M9 9h6v5H9z" fill="#444"/>',
      '<path d="M10 3L6 8l4 5" stroke="#222" stroke-width="2"/>'
    ];
    document.getElementById("viewbar").innerHTML = viewbar.map(d =>
      `<button aria-label="视图控制" class="w-[21px] flex justify-center">${svg("size-[15px]", 16, d)}</button>`).join("");

    const arrow = '<path d="M8 5v10l2.500-2 2 3 1.500-1-1.500-3H15z" fill="#fff"/>';
    const selectbar = [
      '<rect x="0" y="2" width="8" height="5" rx="2" stroke="#d79010" stroke-width="2"/><rect x="7" y="2" width="8" height="5" rx="2" stroke="#d79010" stroke-width="2"/>' + arrow,
      '<path d="M1 12l4-5h9M3 8l5-6h7M1 12h9" stroke="#1d62b0" stroke-width="1.500"/>' + arrow,
      '<path d="M2 1h9v3H9v4h3v3H1V8h3V4H2zM6 11v4" fill="#f08a3c" stroke="#a8481a"/>' + arrow,
      '<path d="M2 4l8-3v10l-8 4z" fill="#a9d2f5" stroke="#1d62b0"/>' + arrow,
      '<path d="M5 0v11M0 5.500h11M3 2l2-2 2 2M2 3L0 5.500 2 8"/>' + arrow,
      '<circle cx="8" cy="8" r="5.500" stroke="#999" stroke-width="3" stroke-dasharray="2 1"/>',
      '<path d="M1 1h14L9.500 8v7l-3-1V8z" fill="#8c9096"/>'
    ];
    document.getElementById("selectbar").innerHTML = selectbar.map(d =>
      `<button aria-label="选择选项" class="w-[26px] flex justify-center">${svg("size-4 overflow-visible", 16, d)}</button>`).join("");

    // ---- stairs: eight treads down to the floor, eight up to the landing
    let stairs = "M913 757v13";
    for (let i = 0; i < 8; i++) stairs += "l23 1v13.400";
    stairs += "M931 728";
    for (let i = 0; i < 8; i++) stairs += "l23 1v13.400";
    for (let i = 0; i < 9; i++) {
      const x = 913 + 23 * i, y = 757 + 14.4 * i;
      stairs += `M${x} ${y}l18 -42`;
      if (i < 8) stairs += `M${x} ${y + 13}l18 -42`;
    }
    stairs += "M1097 885L1115 844M1112 616h-17";
    for (let i = 0; i < 7; i++) stairs += "v12l-23 -.700";
    stairs += "M1131 574h-18l-3 6M1106 586l-11 30";
    for (let i = 0; i < 7; i++) {
      const x = 1090 - 23 * i, y = 585 + 11.4 * i;
      stairs += `M${x + 16} ${y + 0.5}L${x} ${y}l-18 43`;
    }
    document.getElementById("stairs").setAttribute("d", stairs);

    let rails = "";
    for (let i = 0; i < 5; i++) {
      const dy = 16.3 * i, gap = 3;
      rails += `M930 ${643 + dy}L1115 ${759 + dy}v${gap}L930 ${643 + gap + dy}`;
      rails += `M${932 + 3 * i} ${622 + dy - 1.5 * i}L1118 ${531 + dy}v${gap}L${932 + 3 * i} ${622 + gap + dy - 1.5 * i}`;
    }
    // posts
    rails += "M1026 707v80M1027 707v80M1112 762v69M1114 762v69M929 643v73M931 623v97M934 625v103M937 652v77M939 652v77";
    rails += "M1020 582v80M1021 582v80M1108 539v77M1109 539v77M1116 532v75M1118 532v70";
    document.getElementById("rails").setAttribute("d", rails);
  </script>
</body>
</html>
